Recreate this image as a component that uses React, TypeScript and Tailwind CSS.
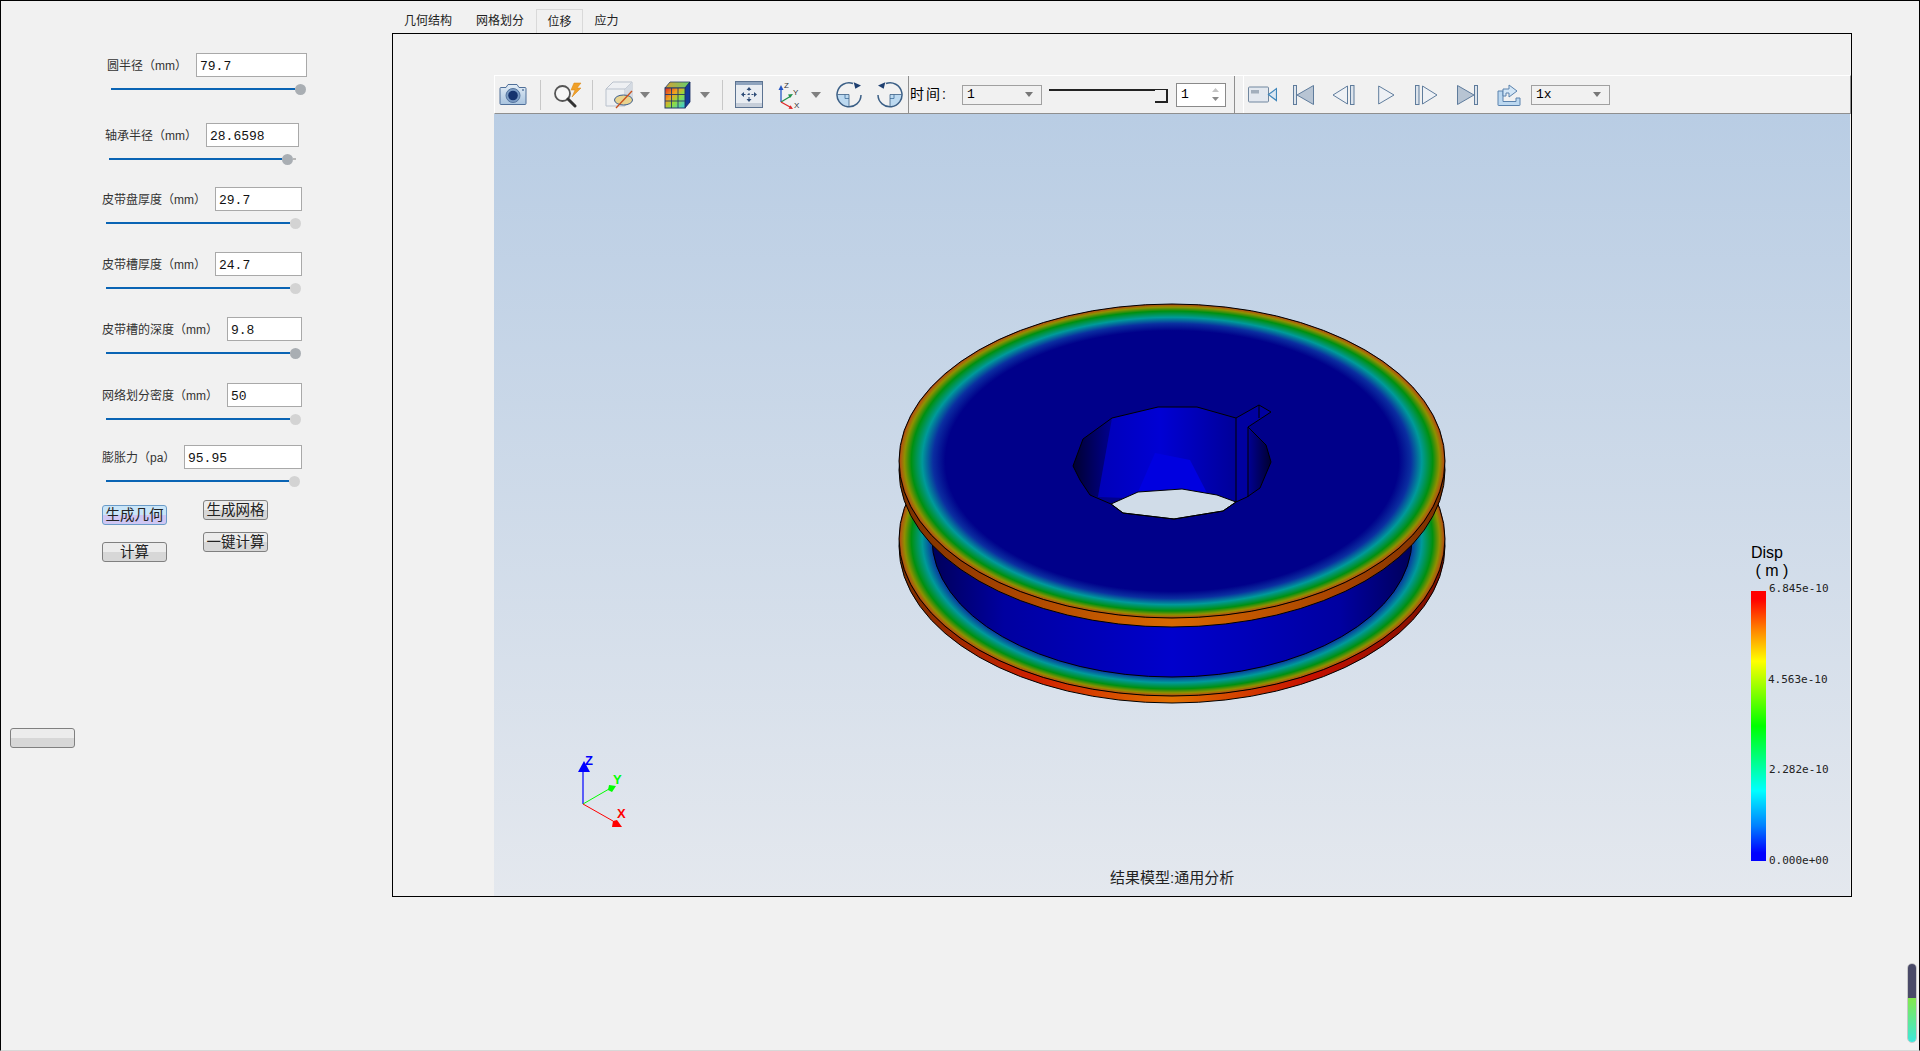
import type { ReactNode } from "react"

const fields = [
  { label: "圆半径（mm）", value: "79.7", row: "mt-0 ml-[106px]", labelW: "w-[89px]", inputW: "w-[111px]", sliderMl: "ml-[4px]", fill: "w-[184px]", rest: "", knob: "bg-[#a9aeb3]" },
  { label: "轴承半径（mm）", value: "28.6598", row: "mt-[28px] ml-[104px]", labelW: "w-[101px]", inputW: "w-[93px]", sliderMl: "ml-[4px]", fill: "w-[173px]", rest: "w-[3px]", knob: "bg-[#a9aeb3]" },
  { label: "皮带盘厚度（mm）", value: "29.7", row: "mt-[22px] ml-[101px]", labelW: "w-[113px]", inputW: "w-[87px]", sliderMl: "ml-[4px]", fill: "w-[184px]", rest: "", knob: "bg-[#d3d3d3]" },
  { label: "皮带槽厚度（mm）", value: "24.7", row: "mt-[23px] ml-[101px]", labelW: "w-[113px]", inputW: "w-[87px]", sliderMl: "ml-[4px]", fill: "w-[184px]", rest: "", knob: "bg-[#d3d3d3]" },
  { label: "皮带槽的深度（mm）", value: "9.8", row: "mt-[23px] ml-[101px]", labelW: "w-[125px]", inputW: "w-[75px]", sliderMl: "ml-[4px]", fill: "w-[184px]", rest: "", knob: "bg-[#a9aeb3]" },
  { label: "网络划分密度（mm）", value: "50", row: "mt-[24px] ml-[101px]", labelW: "w-[125px]", inputW: "w-[75px]", sliderMl: "ml-[4px]", fill: "w-[184px]", rest: "", knob: "bg-[#d3d3d3]" },
  { label: "膨胀力（pa）", value: "95.95", row: "mt-[20px] ml-[101px]", labelW: "w-[82px]", inputW: "w-[118px]", sliderMl: "ml-[4px]", fill: "w-[183px]", rest: "", knob: "bg-[#d3d3d3]" },
]

const tabs = [
  { name: "几何结构", w: "w-[72px]", active: false },
  { name: "网格划分", w: "w-[72px]", active: false },
  { name: "位移", w: "w-[47px]", active: true },
  { name: "应力", w: "w-[47px]", active: false },
]

const legendLabels = [
  { text: "6.845e-10", pos: "left-[18px] top-[-9px]" },
  { text: "4.563e-10", pos: "left-[17px] top-[82px]" },
  { text: "2.282e-10", pos: "left-[18px] top-[172px]" },
  { text: "0.000e+00", pos: "left-[18px] top-[263px]" },
]

function Field({ f }: { f: (typeof fields)[number] }) {
  return (
    <div className={f.row}>
      <div className="flex h-6 items-center">
        <label className={`${f.labelW} pt-[2px] text-[12px] text-[#333]`}>{f.label}</label>
        <input
          readOnly
          value={f.value}
          className={`${f.inputW} h-6 border border-[#a9a9a9] bg-white pl-[3px] pt-[2px] font-['Liberation_Mono',monospace] text-[13px] text-[#111] outline-none`}
        />
      </div>
      <div className={`${f.sliderMl} mt-[6px] flex h-3 items-center`}>
        <div className={`${f.fill} h-[2px] bg-[#0a64b4]`} />
        <div className={`${f.knob} size-[11px] rounded-full`} />
        {f.rest && <div className={`${f.rest} h-[2px] bg-[#b8b8b8]`} />}
      </div>
    </div>
  )
}

function Btn({ children, active, className = "" }: { children?: ReactNode; active?: boolean; className?: string }) {
  const face = active
    ? "border-[#6a9bc8] bg-[linear-gradient(to_bottom,#c9e5f8_50%,#cfc7f3_50%)]"
    : "border-[#808080] bg-[linear-gradient(to_bottom,#ececec_50%,#d7d7d7_50%)]"
  return (
    <button className={`${face} ${className} flex h-5 w-[65px] items-center justify-center rounded-[3px] border text-[14.5px] leading-none text-[#222]`}>
      {children}
    </button>
  )
}

function Sep({ className }: { className: string }) {
  return <div className={`${className} h-[30px] w-px bg-[#c8c8c8]`} />
}

function Drop({ className }: { className: string }) {
  return (
    <svg className={className} width="10" height="6" viewBox="0 0 10 6">
      <path d="M0 0h10L5 6z" fill="#808080" />
    </svg>
  )
}

function Combo({ text, className }: { text: string; className: string }) {
  return (
    <div className={`${className} flex h-[20px] items-center justify-between border border-[#a0a0a0] pl-[4px] pr-[8px] font-['Liberation_Mono',monospace] text-[13px] text-black`}>
      <span className="pt-px">{text}</span>
      <svg width="8" height="5" viewBox="0 0 8 5">
        <path d="M0 0h8L4 5z" fill="#777" />
      </svg>
    </div>
  )
}

function CameraIcon() {
  return (
    <svg className="ml-[4px]" width="28" height="23" viewBox="0 0 28 23">
      <defs>
        <linearGradient id="camBody" x1="0" y1="0" x2="0" y2="1">
          <stop offset="0" stopColor="#e3edf6" />
          <stop offset="1" stopColor="#a9c4df" />
        </linearGradient>
      </defs>
      <path d="M1 5.5q0-1 1-1h5l2-3h9l2 3h6q1 0 1 1v15q0 1-1 1H2q-1 0-1-1z" fill="url(#camBody)" stroke="#4f6f99" />
      <circle cx="14" cy="12.5" r="7" fill="#7c9cc4" stroke="#55759f" />
      <circle cx="14" cy="12.5" r="4.8" fill="#16336e" />
      <circle cx="24" cy="7" r="1" fill="#5d7ba2" />
    </svg>
  )
}

function SearchIcon() {
  return (
    <svg className="ml-[11px]" width="30" height="26" viewBox="0 0 30 26">
      <circle cx="10.5" cy="11.5" r="7.5" fill="#f6f6f6" stroke="#555" strokeWidth="1.8" />
      <path d="M16 17l7 7" stroke="#333" strokeWidth="3" strokeLinecap="round" />
      <path d="M22 1l7 0-4 5h4l-9 9 3-7h-4z" fill="#f0a028" stroke="#d98510" strokeWidth=".5" />
    </svg>
  )
}

function CubeIcon() {
  return (
    <svg className="ml-[12px]" width="29" height="29" viewBox="0 0 29 29">
      <path d="M1 9L8 2h19v16l-7 8H1z" fill="#eef0f3" stroke="#b9c1cc" />
      <path d="M1 9h19v17M20 9l7-7" fill="none" stroke="#b9c1cc" />
      <path d="M20 9l7-7v16l-7 8z" fill="#d4dae2" />
      <ellipse cx="18.5" cy="20" rx="9" ry="5" fill="#e9d38e" stroke="#3d5f8f" />
      <path d="M11 28L27 11" stroke="#c8501e" strokeWidth="1.3" />
    </svg>
  )
}

function GridCubeIcon() {
  return (
    <svg className="ml-[14px]" width="27" height="28" viewBox="0 0 27 28">
      <defs>
        <linearGradient id="cubeFace" x1="0" y1="0" x2="1" y2="1">
          <stop offset="0" stopColor="#e02a20" />
          <stop offset=".35" stopColor="#f0a020" />
          <stop offset=".6" stopColor="#90dc40" />
          <stop offset="1" stopColor="#30c8e8" />
        </linearGradient>
        <linearGradient id="cubeTop" x1="0" y1="0" x2="1" y2="0">
          <stop offset="0" stopColor="#d8a030" />
          <stop offset="1" stopColor="#60d070" />
        </linearGradient>
      </defs>
      <path d="M1 7l5-6h20l-5 6z" fill="url(#cubeTop)" stroke="#253a6a" strokeWidth=".8" />
      <path d="M21 7l5-6v20l-5 6z" fill="#123a9a" stroke="#13265a" strokeWidth=".8" />
      <rect x="1" y="7" width="20" height="20" fill="url(#cubeFace)" stroke="#253a6a" />
      <path d="M7.5 7v20M14 7v20M1 13.5h20M1 20h20" stroke="#253a6a" strokeWidth=".9" />
    </svg>
  )
}

function FitIcon() {
  const c = "#2f4d78"
  return (
    <svg className="ml-[12px]" width="28" height="27" viewBox="0 0 28 27">
      <rect x=".5" y=".5" width="27" height="26" fill="#e9edf2" stroke="#5c7391" />
      <rect x="1" y="1" width="26" height="3" fill="#8ea3bd" />
      <rect x="1" y="22" width="26" height="4" fill="#c6ced9" />
      <path d="M14 8v11M8.5 13.5h11" stroke={c} strokeDasharray="2 2" />
      <path d="M14 6l-2.5 3h5zM14 21l-2.5-3h5zM6 13.5l3-2.5v5zM22 13.5l-3-2.5v5z" fill={c} />
    </svg>
  )
}

function AxesIcon() {
  return (
    <svg className="ml-[15px]" width="24" height="28" viewBox="0 0 24 28" fontFamily="Liberation Sans, sans-serif" fontSize="8" fill="#333">
      <text x="6" y="7">Z</text>
      <text x="15" y="14">Y</text>
      <text x="16" y="27">X</text>
      <path d="M3 21V7" stroke="#2456c4" strokeWidth="1.3" />
      <path d="M3 4L.5 9h5z" fill="#2456c4" />
      <path d="M3 21l10-6" stroke="#20904a" strokeWidth="1.3" />
      <path d="M15 13l-5 .5 2 3.5z" fill="#20904a" />
      <path d="M3 21l9 5" stroke="#e02828" strokeWidth="1.3" />
      <path d="M15 28l-4.500-.3 2-3.500z" fill="#e02828" />
    </svg>
  )
}

function RotateCwIcon() {
  return (
    <svg className="ml-[15px]" width="26" height="27" viewBox="0 0 26 27">
      <path d="M13 13.500H1.500a11.500 11.500 0 0 0 11.500 11.500z" fill="#bcd9f0" />
      <path d="M9 13.500v4h4" fill="none" stroke="#3f6f9c" strokeWidth=".8" />
      <path d="M1.500 13.500H13v11.500" fill="none" stroke="#3b5f86" strokeWidth=".8" />
      <path d="M17 2.500A12 12 0 1 0 25 14" fill="none" stroke="#3b5f86" strokeWidth="1.500" />
      <path d="M17.700 1.200L25 4.500l-5.700 3.300z" fill="#1e3f70" />
    </svg>
  )
}

function RotateCcwIcon() {
  return (
    <svg className="ml-[15px]" width="26" height="27" viewBox="0 0 26 27">
      <path d="M13 13.500h11.500a11.500 11.500 0 0 1-11.500 11.500z" fill="#bcd9f0" />
      <path d="M17 13.500v4h-4" fill="none" stroke="#3f6f9c" strokeWidth=".8" />
      <path d="M24.500 13.500H13v11.500" fill="none" stroke="#3b5f86" strokeWidth=".8" />
      <path d="M9 2.500A12 12 0 1 1 1 14" fill="none" stroke="#3b5f86" strokeWidth="1.500" />
      <path d="M8.300 1.200L1 4.500l5.700 3.300z" fill="#1e3f70" />
    </svg>
  )
}

function MovieIcon() {
  return (
    <svg className="ml-[4px]" width="29" height="17" viewBox="0 0 29 17">
      <rect x=".5" y="1" width="20" height="15" rx="1" fill="#e3e8ef" stroke="#71879f" />
      <rect x="3" y="4" width="8" height="3.500" fill="#a2aebc" />
      <path d="M20.500 8.500l8-6v12z" fill="#dbe7f2" stroke="#3f86bb" strokeWidth="1.200" />
    </svg>
  )
}

const mediaStroke = "#5f7c9c"
const mediaFill = "#dde4ec"

function First() {
  return (
    <svg className="ml-[16px]" width="21" height="20" viewBox="0 0 21 20">
      <rect x=".5" y=".5" width="3" height="19" fill={mediaFill} stroke={mediaStroke} />
      <path d="M20.500 .5v19L4 10z" fill="#b7c4d3" stroke={mediaStroke} />
    </svg>
  )
}

function Prev() {
  return (
    <svg className="ml-[18px]" width="23" height="20" viewBox="0 0 23 20">
      <path d="M15.500 1v18L1 10z" fill="#eef1f5" stroke={mediaStroke} />
      <rect x="18.500" y=".5" width="3.500" height="19" fill={mediaFill} stroke={mediaStroke} />
    </svg>
  )
}

function Play() {
  return (
    <svg className="ml-[23px]" width="17" height="20" viewBox="0 0 17 20">
      <path d="M.7 1v18L16 10z" fill="#eef1f5" stroke={mediaStroke} />
    </svg>
  )
}

function Next() {
  return (
    <svg className="ml-[20px]" width="23" height="20" viewBox="0 0 23 20">
      <rect x=".5" y=".5" width="3.500" height="19" fill={mediaFill} stroke={mediaStroke} />
      <path d="M7.500 1v18L22 10z" fill="#eef1f5" stroke={mediaStroke} />
    </svg>
  )
}

function Last() {
  return (
    <svg className="ml-[19px]" width="21" height="20" viewBox="0 0 21 20">
      <path d="M.5 .5v19L17 10z" fill="#b7c4d3" stroke={mediaStroke} />
      <rect x="17.500" y=".5" width="3" height="19" fill={mediaFill} stroke={mediaStroke} />
    </svg>
  )
}

function ExportIcon() {
  return (
    <svg className="ml-[19px]" width="24" height="22" viewBox="0 0 24 22">
      <path d="M1 7h5v10.500h13V14h4v7q0 .5-.5.5h-21q-.5 0-.5-.5z" fill="#bcd8f0" stroke="#5a82ad" />
      <path d="M6 12V5h6V1l8 6-8 6V9H9v3z" fill="#d3e6f6" stroke="#5a82ad" />
    </svg>
  )
}

function Toolbar() {
  return (
    <div className="flex h-[39px] items-center border-t border-r border-b border-l border-t-white border-r-[#8f8f8f] border-b-[#8f8f8f] border-l-white bg-[#f1f1f1]">
      <CameraIcon />
      <Sep className="ml-[13px]" />
      <SearchIcon />
      <Sep className="ml-[10px]" />
      <CubeIcon />
      <Drop className="ml-[6px]" />
      <GridCubeIcon />
      <Drop className="ml-[9px]" />
      <Sep className="ml-[12px]" />
      <FitIcon />
      <AxesIcon />
      <Drop className="ml-[9px]" />
      <RotateCwIcon />
      <RotateCcwIcon />
      <div className="ml-[5px] h-full w-px bg-[#8f8f8f]" />
      <span className="ml-px w-[52px] text-[14px] tracking-[2px] text-black">时间:</span>
      <Combo text="1" className="w-[80px]" />
      <div className="ml-[7px] flex h-[20px] w-[119px] flex-col">
        <div className="mt-[4px] h-[2px] w-full bg-[#222]" />
        <div className="ml-auto mt-[-1px] h-[13px] w-[13px] border-r-2 border-b-2 border-r-[#222] border-b-[#222] bg-[#f1f1f1]" />
      </div>
      <div className="ml-[8px] flex h-[24px] w-[50px] items-center justify-between border border-[#8a8a8a] bg-white pl-[4px] pr-[6px] font-['Liberation_Mono',monospace] text-[13px] text-black">
        <span className="pt-px">1</span>
        <svg width="7" height="13" viewBox="0 0 7 13">
          <path d="M3.500 0L7 4H0z" fill="#c4c4c4" />
          <path d="M3.500 13L7 9H0z" fill="#8a8a8a" />
        </svg>
      </div>
      <div className="ml-[8px] h-full w-px bg-[#8f8f8f]" />
      <div className="ml-[8px] h-full w-px bg-white" />
      <MovieIcon />
      <First />
      <Prev />
      <Play />
      <Next />
      <Last />
      <ExportIcon />
      <Combo text="1x" className="ml-[10px] w-[79px]" />
    </div>
  )
}

function PulleyScene() {
  return (
    <svg className="absolute inset-0 size-full" viewBox="494 114 1356 782">
      <defs>
        <radialGradient id="disc">
          <stop offset="0" stopColor="#00008a" />
          <stop offset=".83" stopColor="#00008a" />
          <stop offset=".875" stopColor="#0a2ea0" />
          <stop offset=".915" stopColor="#009a9a" />
          <stop offset=".955" stopColor="#009010" />
          <stop offset=".98" stopColor="#8f9000" />
          <stop offset=".994" stopColor="#b05a10" />
          <stop offset="1" stopColor="#8a2800" />
        </radialGradient>
        <linearGradient id="rimTop">
          <stop offset="0" stopColor="#7a3000" />
          <stop offset=".2" stopColor="#a84400" />
          <stop offset=".5" stopColor="#d86800" />
          <stop offset=".8" stopColor="#a84400" />
          <stop offset="1" stopColor="#7a3000" />
        </linearGradient>
        <linearGradient id="rimLow">
          <stop offset="0" stopColor="#7a3000" />
          <stop offset=".25" stopColor="#d02000" />
          <stop offset=".5" stopColor="#e07000" />
          <stop offset=".75" stopColor="#c81000" />
          <stop offset="1" stopColor="#7a1000" />
        </linearGradient>
        <linearGradient id="hub">
          <stop offset="0" stopColor="#00005a" />
          <stop offset=".15" stopColor="#0000a0" />
          <stop offset=".5" stopColor="#0000cc" />
          <stop offset=".85" stopColor="#0000a0" />
          <stop offset="1" stopColor="#00005a" />
        </linearGradient>
        <linearGradient id="wall">
          <stop offset="0" stopColor="#0000b8" />
          <stop offset=".45" stopColor="#0000d4" />
          <stop offset="1" stopColor="#000098" />
        </linearGradient>
        <linearGradient id="wallL">
          <stop offset="0" stopColor="#000030" />
          <stop offset="1" stopColor="#000090" />
        </linearGradient>
        <linearGradient id="wallR">
          <stop offset="0" stopColor="#000098" />
          <stop offset="1" stopColor="#000030" />
        </linearGradient>
      </defs>

      <ellipse cx="1172" cy="546" rx="273" ry="157" fill="url(#rimLow)" stroke="#000" />
      <ellipse cx="1172" cy="539" rx="273" ry="157" fill="url(#disc)" stroke="#000" />
      <ellipse cx="1172" cy="539" rx="240" ry="138" fill="url(#hub)" stroke="#000" />
      <ellipse cx="1172" cy="470" rx="273" ry="157" fill="url(#rimTop)" stroke="#000" />
      <ellipse cx="1172" cy="461" rx="273" ry="157" fill="url(#disc)" stroke="#000" />

      <polygon points="1073,466 1083,439 1112,418 1098,497 1090,495 1080,480" fill="url(#wallL)" />
      <polygon points="1112,418 1158,407 1197,407 1236,418 1236,502 1098,497" fill="url(#wall)" />
      <polygon points="1155,453 1138,492 1207,493 1190,460" fill="#0000e0" />
      <polygon points="1236,418 1259,405 1271,412 1248,427 1248,497 1236,502" fill="#0000a0" />
      <polygon points="1248,427 1266,445 1271,462 1260,488 1247,497" fill="url(#wallR)" />
      <polygon points="1111,504 1138,492 1182,489 1217,495 1236,502 1223,511 1174,519 1123,513" fill="#d0dce8" stroke="#000" />
      <polyline
        points="1236,418 1197,407 1158,407 1112,418 1083,439 1073,466 1080,480 1090,495 1111,504 1123,513 1174,519 1223,511 1236,502 1247,497 1260,488 1271,462 1266,445 1248,427 1271,412 1259,405 1236,418"
        fill="none"
        stroke="#000"
      />
      <path d="M1236 418v84M1248 427v70M1259 405v13" stroke="#000" fill="none" />

      <path d="M583 804V768" stroke="#0000ff" strokeWidth="1.200" />
      <path d="M584 761l-6 11h12z" fill="#0000ff" />
      <path d="M583 804l26-15" stroke="#00ff00" />
      <path d="M616 786l-7-1-1 5 4 2z" fill="#00ff00" />
      <path d="M583 804l30 17" stroke="#ff0000" />
      <path d="M622 827l-10 0 1-6 4-1z" fill="#ff0000" />
      <g fontFamily="Liberation Sans, sans-serif" fontSize="13" fontWeight="700">
        <text x="585" y="765" fill="#0000ff">Z</text>
        <text x="613" y="784" fill="#00ff00">Y</text>
        <text x="617" y="818" fill="#ff0000">X</text>
      </g>
    </svg>
  )
}

function Legend() {
  return (
    <div className="absolute left-[1257px] top-[430px] w-[90px] text-black">
      <p className="h-[18px] text-[16px] leading-[18px]">Disp</p>
      <p className="h-[17px] whitespace-pre text-[16px] leading-[17px]"> ( m )</p>
      <div className="relative mt-[12px] h-[270px] w-[15px] bg-[linear-gradient(to_bottom,#f00_0%,#f00_3%,#ff8000_14%,#ff0_26%,#0f0_50%,#0ff_74%,#0080ff_87%,#00f_97%,#00f_100%)]">
        {legendLabels.map((l) => (
          <span key={l.text} className={`${l.pos} absolute whitespace-nowrap font-['DejaVu_Sans_Mono',monospace] text-[11px] leading-[14px] text-[#222]`}>
            {l.text}
          </span>
        ))}
      </div>
    </div>
  )
}

export default function App() {
  return (
    <div className="relative flex h-[1051px] w-[1920px] overflow-hidden border-t border-r border-l border-b border-t-black border-r-black border-l-black border-b-[#d8d8d8] bg-[#f1f1f1] font-['Liberation_Sans','Noto_Sans_CJK_SC',sans-serif]">
      <aside className="w-[391px] shrink-0 pt-[52px]">
        {fields.map((f) => (
          <Field key={f.label} f={f} />
        ))}
        <div className="ml-[101px] mt-[13px] flex gap-[36px]">
          <div className="pt-[5px]">
            <Btn active>生成几何</Btn>
            <Btn className="mt-[17px]">计算</Btn>
          </div>
          <div>
            <Btn>生成网格</Btn>
            <Btn className="mt-[12px]">一键计算</Btn>
          </div>
        </div>
        <Btn className="ml-[9px] mt-[166px]" />
      </aside>

      <main className="w-[1460px] shrink-0">
        <nav className="flex h-[32px] items-end pt-[8px]">
          {tabs.map((t) => (
            <div
              key={t.name}
              className={`${t.w} ${t.active ? "border-x border-t border-[#d9d9d9]" : ""} flex h-[24px] items-center justify-center text-[12px] text-[#222]`}
            >
              {t.name}
            </div>
          ))}
        </nav>
        <section className="h-[864px] border border-black pl-[101px] pt-[41px]">
          <Toolbar />
          <div className="relative h-[782px] w-[1356px] bg-[linear-gradient(to_bottom,#b9cde4,#e4e8ee)]">
            <PulleyScene />
            <Legend />
            <p className="absolute left-[616px] top-[755px] text-[15px] leading-[18px] text-[#222]">结果模型:通用分析</p>
          </div>
        </section>
      </main>

      <div className="absolute bottom-[7px] right-[2px] flex h-[80px] w-[10px] flex-col overflow-hidden rounded-full border border-[#c8c8c8]">
        <div className="h-[34px] bg-[#4a4a68]" />
        <div className="flex-1 bg-[linear-gradient(to_bottom,#84e84c,#3ce8dc)]" />
      </div>
    </div>
  )
}
